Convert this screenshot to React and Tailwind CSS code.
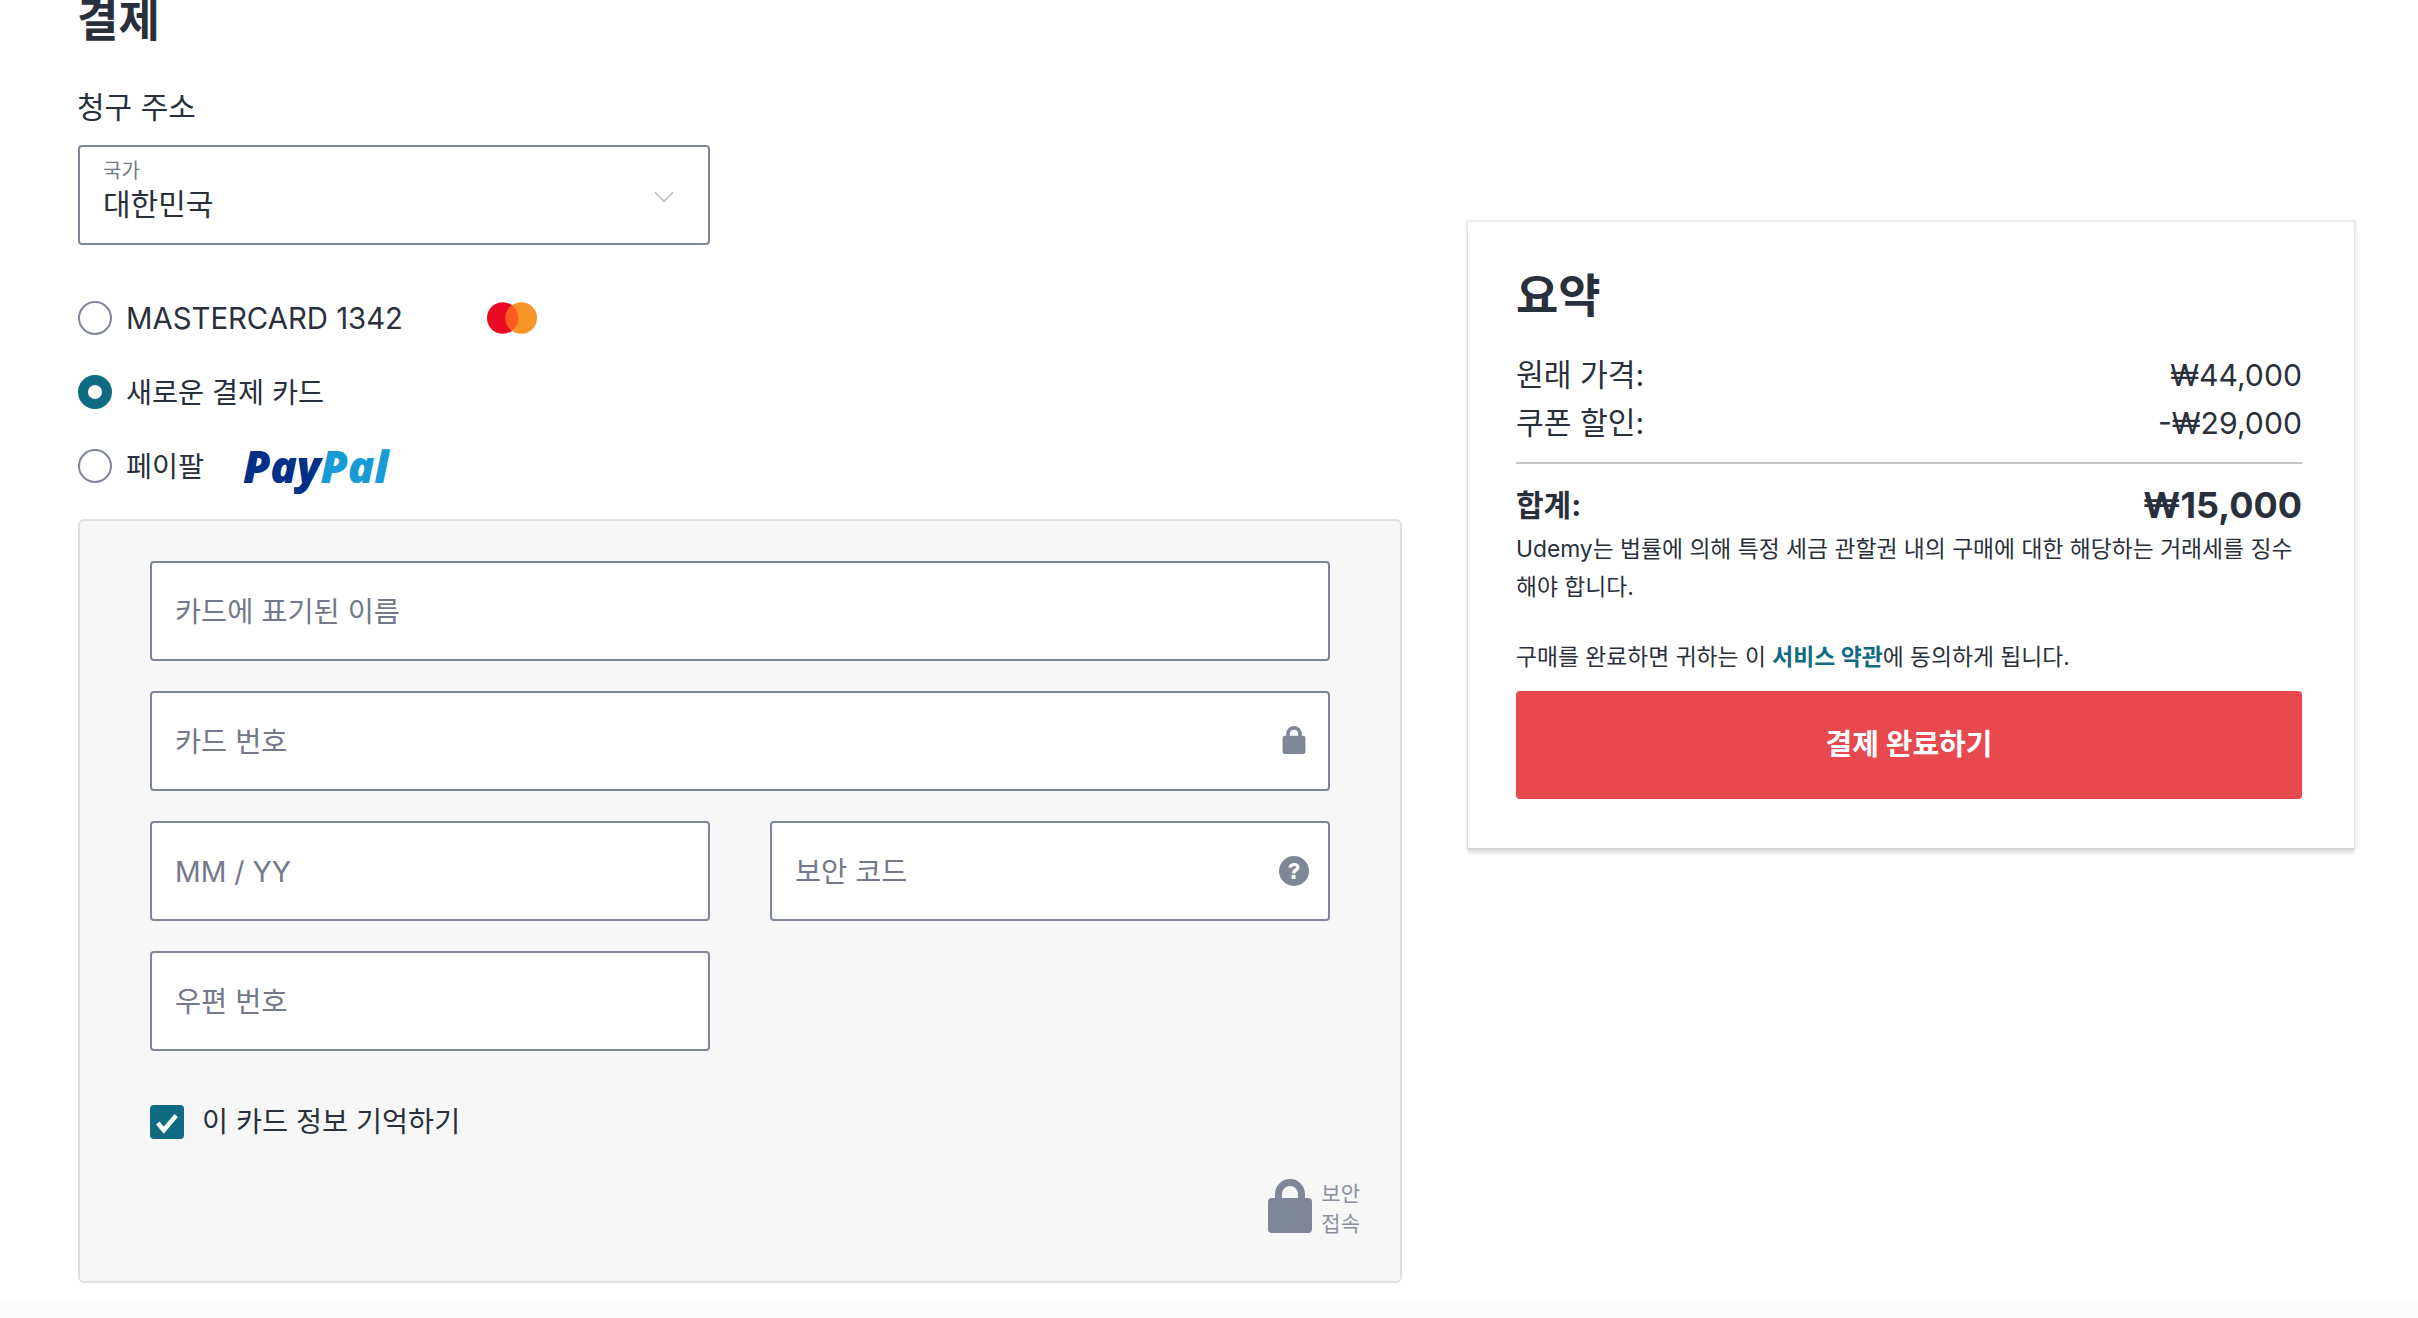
import { ChevronDown } from 'lucide-react';

const FONT = "font-['Inter','Noto_Sans_CJK_KR',sans-serif]";

function LockIcon({ className }) {
  return (
    <svg viewBox="0 0 44 54" className={className} fill="#7f8698">
      <path d="M7 20V15a15 15 0 0 1 30 0v5h-7v-5a8 8 0 0 0-16 0v5z" />
      <rect x="0" y="19" width="44" height="35" rx="4" />
    </svg>
  );
}

function HelpIcon() {
  return (
    <svg viewBox="0 0 30 30" className="w-[30px] h-[30px] -mr-[4px]">
      <circle cx="15" cy="15" r="15" fill="#7f8698" />
      <path d="M9.5 11.5c.3-3 2.6-4.6 5.6-4.6 3.1 0 5.4 1.7 5.4 4.4 0 2-1.1 3-2.5 3.9-1.1.7-1.5 1.1-1.5 2.3h-3.4c0-2.3.8-3.4 2.4-4.4 1-.7 1.5-1.1 1.5-1.8 0-.9-.8-1.4-1.9-1.4-1.2 0-2 .7-2.2 1.9z" fill="#fff" />
      <rect x="12.6" y="19" width="3.9" height="3.9" fill="#fff" />
    </svg>
  );
}

function Radio({ checked }) {
  if (checked) {
    return <span className="w-[34px] h-[34px] shrink-0 rounded-full border-[10px] border-[#0f6b82] bg-white" />;
  }
  return <span className="w-[34px] h-[34px] shrink-0 rounded-full border-2 border-[#7f8698] bg-white" />;
}

function Field({ placeholder, icon, className = '' }) {
  return (
    <div className={`flex items-center h-[100px] px-[23px] bg-white border-2 border-[#7f8698] rounded-[4px] ${className}`}>
      <input
        placeholder={placeholder}
        className="flex-1 min-w-0 pt-[3px] bg-transparent outline-none text-[28.4px] text-[#29303b] placeholder:text-[#73788a]"
      />
      {icon}
    </div>
  );
}

export default function App() {
  return (
    <div className={`${FONT} w-[2418px] h-[1318px] overflow-hidden bg-white text-[#29303b] flex flex-col`}>
      <div className="flex h-[1300px] shrink-0">
        <div className="w-[1324px] ml-[78px] shrink-0 flex flex-col">
          <h1 className="text-[45px] leading-[60px] font-bold -mt-[9px] -ml-[1px]">결제</h1>
          <h2 className="text-[30px] leading-[40px] mt-[36px] -ml-[1px]">청구 주소</h2>

          <div className="w-[632px] h-[100px] mt-[18px] border-2 border-[#7f8698] rounded-[4px] pl-[23px] pr-[23px] pt-[10px] flex justify-between">
            <div>
              <div className="text-[20px] leading-[28px] text-[#73788a]">국가</div>
              <div className="text-[30px] leading-[38px]">대한민국</div>
            </div>
            <ChevronDown className="w-[34px] h-[34px] mt-[23px] mr-[4px] text-[#b9bdc4]" strokeWidth={1.2} />
          </div>

          <div className="flex items-center mt-[56px] h-[34px]">
            <Radio />
            <span className="ml-[14px] w-[361px] pt-[1px] text-[29.3px] leading-[40px]">MASTERCARD 1342</span>
            <svg viewBox="0 0 50 32" className="w-[50px] h-[32px]">
              <circle cx="15.75" cy="16" r="15.75" fill="#e80b22" />
              <circle cx="34.25" cy="16" r="15.75" fill="#f7952a" />
              <path d="M25 3.3a15.75 15.75 0 0 1 0 25.4a15.75 15.75 0 0 1 0-25.4z" fill="#ff5a1f" />
            </svg>
          </div>
          <div className="flex items-center mt-[40px] h-[34px]">
            <Radio checked />
            <span className="ml-[14px] pt-[1px] text-[28.3px] leading-[40px]">새로운 결제 카드</span>
          </div>
          <div className="flex items-center mt-[40px] h-[34px]">
            <Radio />
            <span className="ml-[14px] w-[117px] pt-[1px] text-[28.3px] leading-[40px]">페이팔</span>
            <span className="font-['Open_Sans',sans-serif] italic font-extrabold text-[44px] leading-[46px] tracking-[-0.2px]">
              <span className="text-[#003087]">Pay</span>
              <span className="text-[#169bd7]">Pal</span>
            </span>
          </div>

          <div className="w-[1324px] h-[764px] mt-[36px] bg-[#f7f7f7] border-2 border-[#dedfe0] rounded-[6px] pl-[70px] pr-[70px] pt-[40px] flex flex-col">
            <Field placeholder="카드에 표기된 이름" />
            <Field placeholder="카드 번호" className="mt-[30px]" icon={<LockIcon className="w-[24px] h-[28px] -mr-[1px] -mt-[3px]" />} />
            <div className="grid grid-cols-2 gap-x-[60px] mt-[30px]">
              <Field placeholder="MM / YY" />
              <Field placeholder="보안 코드" icon={<HelpIcon />} />
            </div>
            <div className="grid grid-cols-2 gap-x-[60px] mt-[30px]">
              <Field placeholder="우편 번호" />
            </div>

            <label className="flex items-center mt-[54px] h-[34px]">
              <span className="w-[34px] h-[34px] rounded-[4px] bg-[#0f6b82] flex items-center justify-center">
                <svg viewBox="0 0 24 24" className="w-[26px] h-[26px]">
                  <path d="M3.5 13l5.5 6.5L20.5 6" fill="none" stroke="#fff" strokeWidth="4.2" />
                </svg>
              </span>
              <span className="ml-[18px] text-[28.3px] leading-[40px]">이 카드 정보 기억하기</span>
            </label>

            <div className="flex justify-end mt-[40px] -mr-[30px]">
              <LockIcon className="w-[44px] h-[54px]" />
              <div className="ml-[9px] text-[21px] leading-[30px] text-[#8a90a0]">
                <div>보안</div>
                <div>접속</div>
              </div>
            </div>
          </div>
        </div>

        <div className="w-[886px] h-[626px] ml-[66px] mt-[222px] bg-white shadow-[0_0_2px_2px_rgba(20,23,28,0.1),0_6px_2px_0_rgba(20,23,28,0.1)] pl-[48px] pr-[52px] pt-[43px] flex flex-col">
          <h2 className="text-[46px] leading-[60px] font-bold">요약</h2>
          <div className="flex justify-between mt-[26px] text-[30.2px] leading-[48px]">
            <span>원래 가격:</span>
            <span>₩44,000</span>
          </div>
          <div className="flex justify-between text-[30.2px] leading-[48px] pb-[15px] border-b-2 border-[#c4c5c7]">
            <span>쿠폰 할인:</span>
            <span>-₩29,000</span>
          </div>
          <div className="flex justify-between items-center mt-[18px] h-[46px] font-bold">
            <span className="text-[30px]">합계:</span>
            <span className="text-[36px]">₩15,000</span>
          </div>
          <p className="text-[22.8px] leading-[38px] mt-[2px] max-w-[780px]">
            Udemy는 법률에 의해 특정 세금 관할권 내의 구매에 대한 해당하는 거래세를 징수해야 합니다.
          </p>
          <p className="text-[22.8px] leading-[38px] mt-[32px]">
            구매를 완료하면 귀하는 이 <a className="font-bold text-[#0f6b82]">서비스 약관</a>에 동의하게 됩니다.
          </p>
          <button className="h-[108px] mt-[15px] rounded-[4px] bg-[#e8494f] text-white text-[29px] font-bold">
            결제 완료하기
          </button>
        </div>
      </div>
      <div className="h-[18px] bg-[#fcfcfc]" />
    </div>
  );
}
